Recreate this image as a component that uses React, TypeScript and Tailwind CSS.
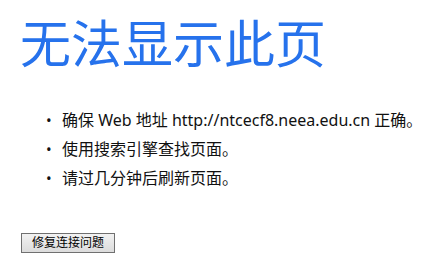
export default function App() {
  const items = [
    "确保 Web 地址 http://ntcecf8.neea.edu.cn 正确。",
    "使用搜索引擎查找页面。",
    "请过几分钟后刷新页面。",
  ];

  return (
    <div className="w-[433px] h-[269px] bg-white overflow-hidden font-['Noto_Sans','Noto_Sans_CJK_SC',sans-serif]">
      <div className="pl-[20px] pt-[12px]">
        <h1 className="text-[51px] leading-[62px] text-[#2672ec] font-normal">无法显示此页</h1>
      </div>

      <ul className="mt-[36px] pl-[46px] flex flex-col gap-[9px] text-[16px] leading-[20px] text-[#111]">
        {items.map((t) => (
          <li key={t} className="flex items-center">
            <span className="w-[16px] text-[15px]">•</span>
            <span>{t}</span>
          </li>
        ))}
      </ul>

      <div className="pl-[21px] mt-[41px]">
        <button className="w-[94px] h-[20px] border border-[#707070] bg-gradient-to-b from-[#f2f2f2] to-[#dcdcdc] text-[12px] leading-[18px] text-black">
          修复连接问题
        </button>
      </div>
    </div>
  );
}
